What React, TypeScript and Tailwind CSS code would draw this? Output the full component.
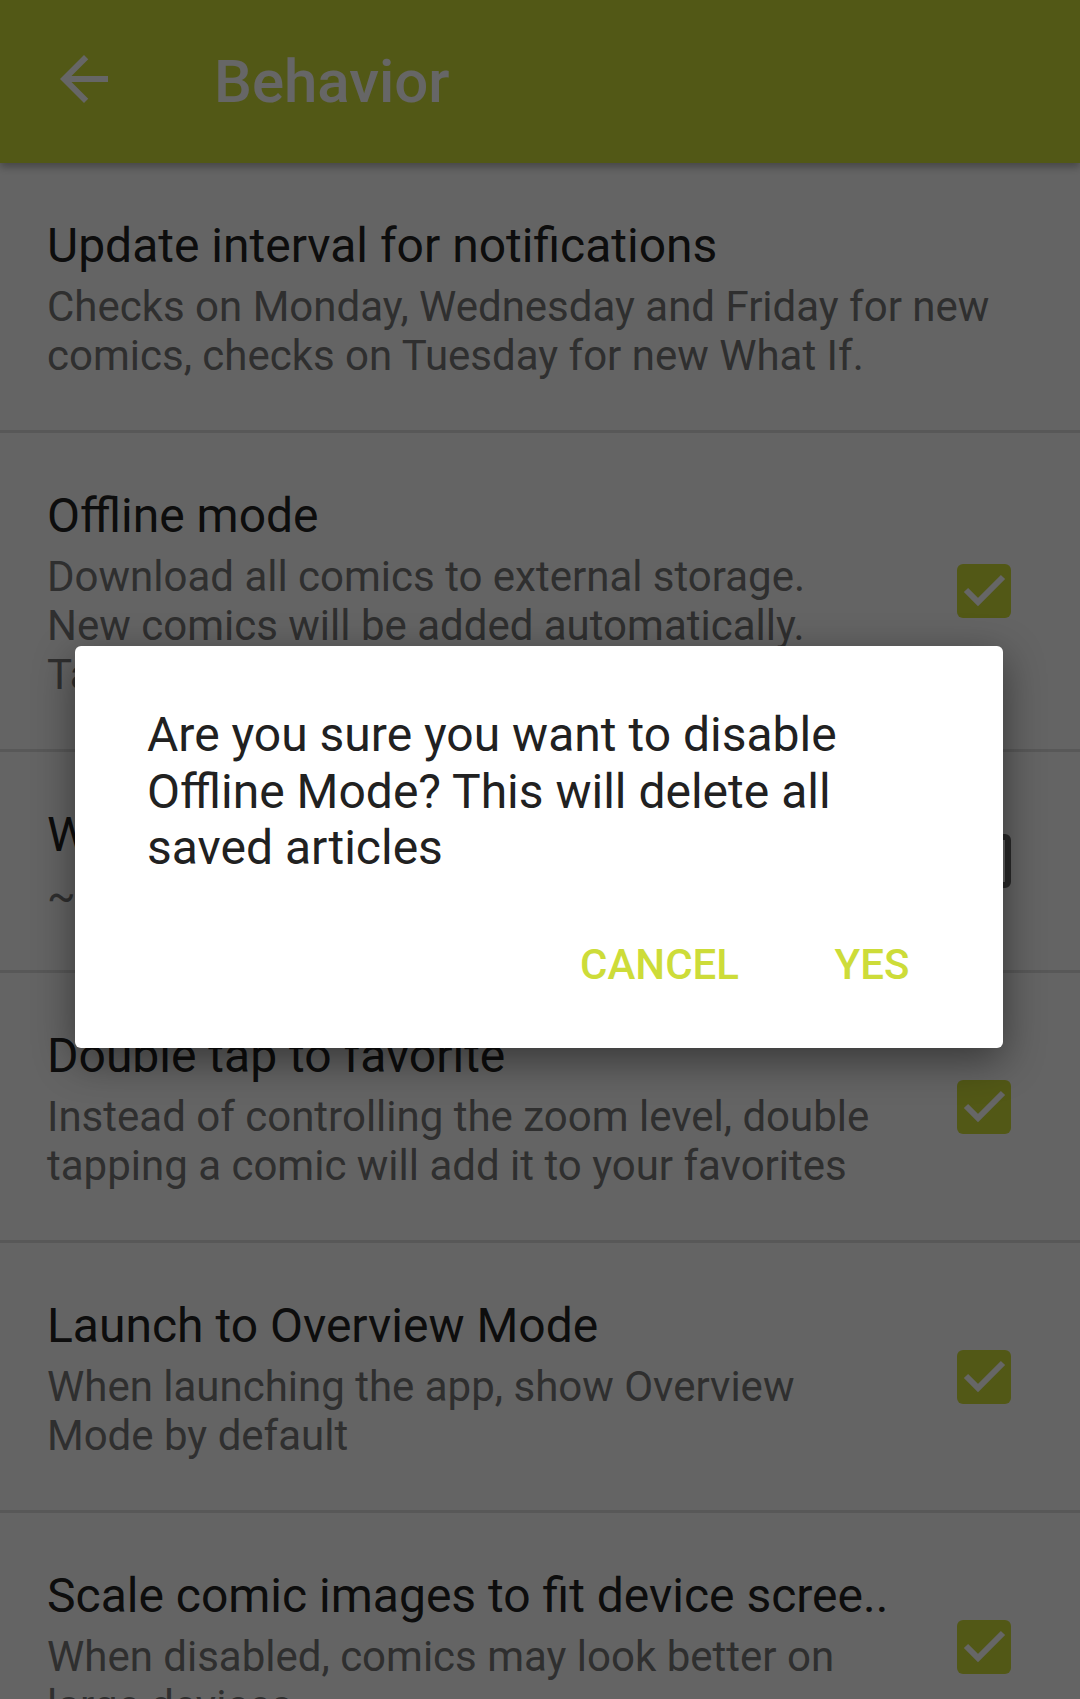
import React from "react";

type Pref = {
  title: string;
  summary: string[];
  checkbox?: "on" | "off";
};

const prefs: Pref[] = [
  {
    title: "Update interval for notifications",
    summary: [
      "Checks on Monday, Wednesday and Friday for new",
      "comics, checks on Tuesday for new What If.",
    ],
  },
  {
    title: "Offline mode",
    summary: [
      "Download all comics to external storage.",
      "New comics will be added automatically.",
      "Takes about 100MB of storage.",
    ],
    checkbox: "on",
  },
  {
    title: "What If offline mode",
    summary: ["~ 50MB of storage"],
    checkbox: "off",
  },
  {
    title: "Double tap to favorite",
    summary: [
      "Instead of controlling the zoom level, double",
      "tapping a comic will add it to your favorites",
    ],
    checkbox: "on",
  },
  {
    title: "Launch to Overview Mode",
    summary: ["When launching the app, show Overview", "Mode by default"],
    checkbox: "on",
  },
  {
    title: "Scale comic images to fit device scree..",
    summary: ["When disabled, comics may look better on", "large devices"],
    checkbox: "on",
  },
];

function Checkbox({ checked }: { checked: boolean }) {
  if (!checked) {
    return <div className="w-[54px] h-[54px] rounded-[6px] border-[6px] border-[#666666]" />;
  }
  return (
    <div className="w-[54px] h-[54px] rounded-[6px] bg-[#cddc39]">
      <svg width="54" height="54" viewBox="0 0 54 54" fill="none">
        <polyline points="9,26 21,38 46,13" stroke="#ffffff" strokeWidth="6" />
      </svg>
    </div>
  );
}

function PrefRow({ pref }: { pref: Pref }) {
  return (
    <div className="flex items-center border-b-[3px] border-[#dddddd] pl-[47px] pr-[69px]">
      <div className="flex-1 pt-[55px] pb-[50px]">
        <div className="text-[48px] leading-[56px] text-[#212121] whitespace-nowrap">{pref.title}</div>
        <div className="mt-[8px] text-[42px] leading-[49px] text-[#757575] whitespace-nowrap">
          {pref.summary.map((line, i) => (
            <div key={i}>{line}</div>
          ))}
        </div>
      </div>
      {pref.checkbox && <Checkbox checked={pref.checkbox === "on"} />}
    </div>
  );
}

export default function App() {
  return (
    <div className="relative w-[1080px] h-[1699px] overflow-hidden bg-[#fafafa] font-['Roboto',sans-serif]">
      {/* Toolbar */}
      <header className="relative z-10 h-[163px] flex items-center bg-[#cddc39] shadow-[0_4px_8px_rgba(0,0,0,0.3)]">
        <svg className="ml-[48px] -mt-[5px]" width="72" height="72" viewBox="0 0 24 24" fill="#ffffff">
          <path d="M20 11H7.83l5.59-5.59L12 4l-8 8 8 8 1.41-1.41L7.83 13H20v-2z" />
        </svg>
        <h1 className="ml-[94px] text-[60px] leading-[60px] font-medium text-white">Behavior</h1>
      </header>

      {/* Preferences */}
      <main>
        {prefs.map((p) => (
          <PrefRow key={p.title} pref={p} />
        ))}
      </main>

      {/* Dim + dialog */}
      <div className="absolute inset-0 z-20 bg-black/60">
        <div className="absolute left-[75px] top-[646px] w-[928px] rounded-[6px] bg-white shadow-[0_12px_40px_rgba(0,0,0,0.45)]">
          <p className="pt-[61px] pl-[72px] pr-[60px] text-[48px] leading-[56.5px] text-[#212121]">
            Are you sure you want to disable Offline Mode? This will delete all saved articles
          </p>
          <div className="mt-[34px] pb-[29px] pr-[35px] flex justify-end gap-[13px]">
            <button className="h-[108px] min-w-[192px] px-[24px] text-[42px] font-medium uppercase text-[#cddc39]">
              Cancel
            </button>
            <button className="h-[108px] min-w-[192px] px-[24px] text-[42px] font-medium uppercase text-[#cddc39]">
              Yes
            </button>
          </div>
        </div>
      </div>
    </div>
  );
}
